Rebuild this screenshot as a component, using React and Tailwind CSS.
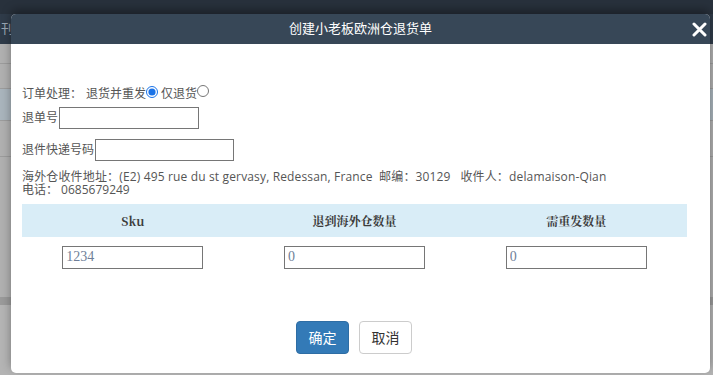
import React from "react";

const font = { fontFamily: '"Open Sans", "Noto Sans CJK SC", sans-serif' };

const App = () => {
  return (
    <div className="relative h-[375px] w-[713px] overflow-hidden bg-[#b4b4b4]" style={font}>
      {/* dimmed page behind the dialog */}
      <div className="h-[14px] bg-[#28313c]" />
      <div className="flex h-[30px] items-center bg-[#2f3b49] pl-[1px] text-[13px] text-[#9aa6b3]">刊</div>
      <div className="h-[20px] border-b border-[#9c9c9c] bg-[#b0b0b0]" />
      <div className="h-[25px] border-b border-[#9c9c9c] bg-[#b0b0b0]" />
      <div className="h-[32px] border-b border-[#9c9c9c] bg-[#a9b4bc]" />
      <div className="h-[36px] border-b border-[#9c9c9c] bg-[#b0b0b0]" />
      <div className="h-[140px] bg-[#b0b0b0]" />
      <div className="h-[8px] bg-[#9a9a9a]" />

      {/* dialog */}
      <div className="absolute left-[11px] top-[14px] flex h-[359px] w-[699px] flex-col overflow-hidden rounded-[5px] bg-white shadow-[0_-4px_10px_rgba(0,0,0,0.35)]">
        <div className="relative flex h-[30px] items-center justify-center bg-[#374757] text-[13px] text-white">
          创建小老板欧洲仓退货单
          <svg className="absolute right-[3px] top-[8px]" width="15" height="15" viewBox="0 0 15 15">
            <path d="M2 2 L13 13 M13 2 L2 13" stroke="white" strokeWidth="3" strokeLinecap="round" />
          </svg>
        </div>

        <div className="flex flex-col px-[11px] pt-[42px] text-[12px] text-[#555]">
          <div className="flex h-[16px] items-center">
            <span>订单处理：</span>
            <span className="ml-[4px]">退货并重发</span>
            <input type="radio" name="t" defaultChecked className="m-0 h-[12px] w-[12px] self-start accent-[#1a73e8]" />
            <span className="ml-[3px]">仅退货</span>
            <input type="radio" name="t" className="m-0 h-[12px] w-[12px] -translate-y-[1px] self-start" />
          </div>

          <div className="mt-[5px] flex h-[22px] items-center">
            <span>退单号</span>
            <input className="ml-[1px] h-[22px] w-[140px] border border-[#767676] bg-white outline-none" />
          </div>

          <div className="mt-[10px] flex h-[22px] items-center">
            <span>退件快递号码</span>
            <input className="ml-[1px] h-[22px] w-[139px] border border-[#767676] bg-white outline-none" />
          </div>

          <div className="mt-[9px] leading-[13px]">
            <div className="tracking-[0.15px]">
              海外仓收件地址：(E2) 495 rue du st gervasy, Redessan, France &nbsp;邮编：30129 &nbsp;&nbsp;收件人：delamaison-Qian
            </div>
            <div>电话： 0685679249</div>
          </div>

          <div
            className="mt-[8px] w-[665px]"
            style={{ fontFamily: '"Noto Serif CJK SC", "Liberation Serif", serif' }}
          >
            <div className="grid h-[33px] grid-cols-3 items-center bg-[#d9edf7] text-center text-[12px] font-bold text-[#3c3c3c]">
              <div>Sku</div>
              <div>退到海外仓数量</div>
              <div>需重发数量</div>
            </div>
            <div className="grid h-[40px] grid-cols-3 items-center">
              {["1234", "0", "0"].map((v, i) => (
                <div key={i} className="flex justify-center">
                  <input
                    defaultValue={v}
                    className="h-[23px] w-[141px] border border-[#767676] px-[3px] text-[14px] text-[#6f7f99] outline-none"
                    style={{ fontFamily: '"Liberation Serif", serif' }}
                  />
                </div>
              ))}
            </div>
          </div>
        </div>

        <div className="mt-[44px] flex justify-center gap-[10px] pr-[13px]">
          <button className="h-[33px] w-[53px] rounded-[4px] border border-[#2e6da4] bg-[#337ab7] text-[14px] text-white">
            确定
          </button>
          <button className="h-[33px] w-[53px] rounded-[4px] border border-[#ccc] bg-white text-[14px] text-[#333]">
            取消
          </button>
        </div>
      </div>
    </div>
  );
};

export default App;
